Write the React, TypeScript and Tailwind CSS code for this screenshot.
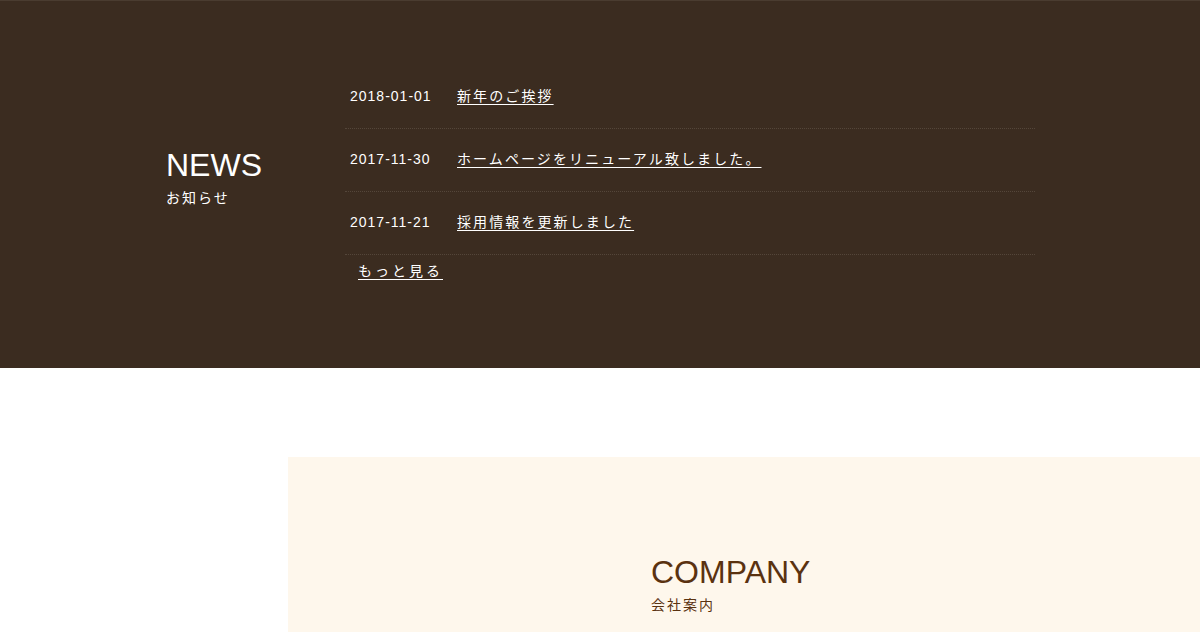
const news = [
  { date: '2018-01-01', title: '新年のご挨拶' },
  { date: '2017-11-30', title: 'ホームページをリニューアル致しました。' },
  { date: '2017-11-21', title: '採用情報を更新しました' },
]

const font = { fontFamily: '"Liberation Sans", "Noto Sans CJK JP", sans-serif' }

export default function App() {
  return (
    <div style={font} className="min-h-[632px] bg-white">
      <section className="h-[368px] bg-[#3b2c20] border-t border-[#4a3c30]">
        <div className="mx-auto flex w-[870px] pt-[65px]">
          <div className="w-[180px] shrink-0 pt-[83px] pl-[1px] text-white">
            <h2 className="text-[32px] leading-none">NEWS</h2>
            <p className="mt-[10px] text-[14px] leading-none tracking-[2px]">お知らせ</p>
          </div>
          <div className="flex-1">
            <ul>
              {news.map(item => (
                <li
                  key={item.date}
                  className="flex h-[63px] items-center border-b border-dotted border-[#54463a] pb-[2px] pl-[5px] text-white"
                >
                  <span className="w-[107px] shrink-0 text-[14px] tracking-[1px]">{item.date}</span>
                  <a href="#" className="text-[14px] tracking-[2.1px] underline underline-offset-[3px]">
                    {item.title}
                  </a>
                </li>
              ))}
            </ul>
            <a href="#" className="mt-[6px] ml-[13px] inline-block text-[14px] tracking-[3px] text-white underline underline-offset-[3px]">
              もっと見る
            </a>
          </div>
        </div>
      </section>
      <div className="h-[89px]" />
      <section className="ml-[288px] h-[175px] bg-[#fef7ec] pl-[363px] pt-[99px] text-[#5a3210]">
        <h2 className="text-[32px] leading-none">COMPANY</h2>
        <p className="mt-[10px] text-[14px] leading-none tracking-[2px]">会社案内</p>
      </section>
    </div>
  )
}
